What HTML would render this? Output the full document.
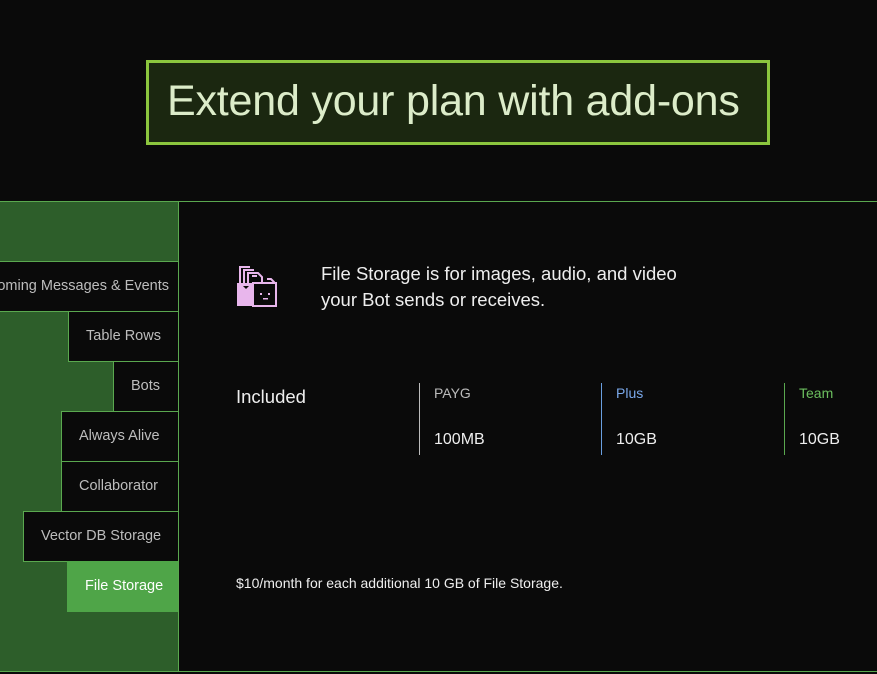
<!DOCTYPE html>
<html><head><meta charset="utf-8"><style>
*{margin:0;padding:0;box-sizing:border-box}
body{width:877px;height:674px;background:#0a0a0a;font-family:"Liberation Sans",sans-serif;position:relative;overflow:hidden;color:#e6e6e6}
.h{position:absolute;left:146px;top:60px;width:624px;height:85px;border:3px solid #8cc63e;background:#1b2710;color:#dcecc9;font-size:43px;line-height:76px;padding-left:18px;letter-spacing:-0.2px}
.sec{position:absolute;left:0;top:201px;width:877px;height:471px;border-top:1px solid #5aa84f;border-bottom:1px solid #5aa84f}
.side{position:absolute;left:0;top:0;width:179px;height:469px;background:#2d5e2a;border-right:1px solid #5aa84f}
.tab{position:absolute;right:0;height:51px;background:#0a0a0a;border:1px solid #5aa84f;border-right:none;color:#bdbdbd;font-size:14.5px;line-height:49px;padding:0 17px;white-space:nowrap}
.tab.a{background:#4fa548;color:#fff;border-color:#4fa548}
.t{position:absolute;font-size:18.5px;color:#eee}
.col{position:absolute;top:181px;height:72px;border-left:1px solid #bbb;padding-left:14px}
.col .l{font-size:14px;margin-top:2px}
.col .v{font-size:16px;margin-top:30px;color:#eee}
</style></head><body>
<div class="h">Extend your plan with add-ons</div>
<div class="sec">
<div class="side">
<div class="tab" style="top:59px;left:-40px">Incoming Messages &amp; Events</div>
<div class="tab" style="top:109px;left:68px">Table Rows</div>
<div class="tab" style="top:159px;left:113px">Bots</div>
<div class="tab" style="top:209px;left:61px">Always Alive</div>
<div class="tab" style="top:259px;left:61px">Collaborator</div>
<div class="tab" style="top:309px;left:23px">Vector DB Storage</div>
<div class="tab a" style="top:359px;left:67px">File Storage</div>
</div>
<svg style="position:absolute;left:236px;top:63px" width="42" height="42" viewBox="0 0 42 42">
<g fill="none" stroke="#e8b6ec" stroke-width="2">
<path d="M4 19V2h10M8 19V5h10M12 19V8h10l4 4v6M16 11h5"/>
</g>
<rect x="1" y="18" width="16" height="23" fill="#e8b6ec"/>
<path d="M7 21h6l-3 3z" fill="#0a0a0a"/>
<rect x="17" y="18" width="23" height="23" fill="#0a0a0a" stroke="#e8b6ec" stroke-width="2"/>
<path d="M31 14h4l3 3v2" fill="none" stroke="#e8b6ec" stroke-width="2"/>
<rect x="24" y="28" width="2" height="2" fill="#e8b6ec"/><rect x="32" y="28" width="2" height="2" fill="#e8b6ec"/>
<rect x="27" y="33" width="5" height="1.5" fill="#e8b6ec"/>
</svg>
<div class="t" style="left:321px;top:59px;line-height:26px">File Storage is for images, audio, and video<br>your Bot sends or receives.</div>
<div class="t" style="left:236px;top:184px">Included</div>
<div class="col" style="left:419px"><div class="l" style="color:#bbb">PAYG</div><div class="v">100MB</div></div>
<div class="col" style="left:601px;border-color:#6a9fe0"><div class="l" style="color:#7aa8ea">Plus</div><div class="v">10GB</div></div>
<div class="col" style="left:784px;border-color:#5aa84f"><div class="l" style="color:#6cbf5f">Team</div><div class="v">10GB</div></div>
<div style="position:absolute;left:236px;top:373px;font-size:14px;color:#eee">$10/month for each additional 10 GB of File Storage.</div>
</div>
</body></html>
